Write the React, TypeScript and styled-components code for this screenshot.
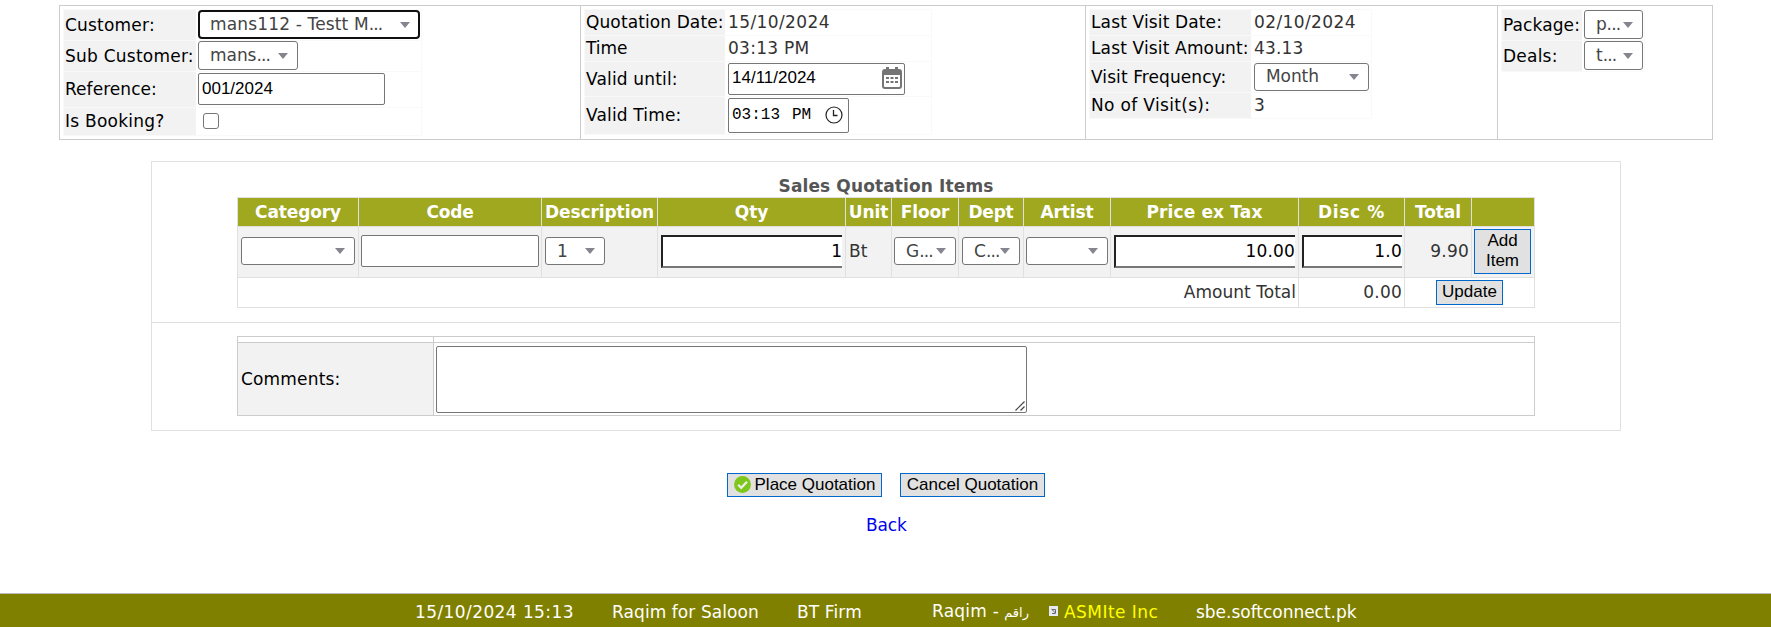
import React from 'react';
import styled, { createGlobalStyle, css } from 'styled-components';

const GlobalStyle = createGlobalStyle`
  * { box-sizing: border-box; }
  body {
    margin: 0;
    background: #fff;
    font: 17px/20px Verdana, 'DejaVu Sans', sans-serif;
    color: #333;
    overflow: hidden;
  }
`;

/* Width corrections (in thousandths of an em) that give the body face Verdana's proportions. */
const REGULAR: Record<string, number> = {
  a: -12, b: -12, c: -29, d: -12, e: -19, g: -12, l: -4, i: -4, k: 13, o: -5, p: -12, q: -12,
  r: 16, ' ': 34, ':': 117, '/': 117, '.': 46, '-': 93, '(': 64, ')': 64, S: 49, I: 126, M: -20,
  T: 5, '?': 14,
};
const BOLD: Record<string, number> = {
  C: -10, a: -7, t: -23, e: -14, g: -17, r: 4, c: -5, p: -17, F: -33, ' ': 40, S: -10, I: 174,
  m: 16, '%': 200, d: -17, x: 24,
};

const Tracked = styled.span<{ $spacing: number }>`
  letter-spacing: ${(p) => p.$spacing}em;
  white-space: nowrap;
`;

function Text({ children, bold }: { children: string; bold?: boolean }) {
  const table = bold ? BOLD : REGULAR;
  const total = [...children].reduce((sum, ch) => sum + (table[ch] || 0), 0);
  return <Tracked $spacing={total / children.length / 1000}>{children}</Tracked>;
}

const Page = styled.div`
  height: 627px;
  padding-top: 5px;
  display: flex;
  flex-direction: column;
  align-items: flex-start;
`;

const Summary = styled.div`
  display: flex;
  margin-left: 59px;
  height: 135px;
  border: 1px solid #ccc;
`;

const SummaryCell = styled.div<{ $width: number }>`
  width: ${(p) => p.$width}px;
  padding: 3px;
  & + & { border-left: 1px solid #ccc; }
`;

const Fields = styled.div<{ $width: number }>`
  width: ${(p) => p.$width}px;
  border: 1px solid #f9f9f9;
  border-bottom: 0;
`;

const FieldRow = styled.div<{ $height: number }>`
  display: flex;
  height: ${(p) => p.$height}px;
  border-bottom: 1px solid #f9f9f9;
`;

const FieldLabel = styled.div<{ $width: number }>`
  width: ${(p) => p.$width}px;
  padding: 0 0 1px 1px;
  display: flex;
  align-items: center;
  background: #f2f2f2;
  color: #000;
`;

const FieldValue = styled.div<{ $pad?: number }>`
  flex: 1;
  padding: 0 0 1px ${(p) => p.$pad ?? 2}px;
  display: flex;
  align-items: center;
`;

const SelectBox = styled.div<{ $width: number; $height?: number; $focused?: boolean }>`
  width: ${(p) => p.$width}px;
  height: ${(p) => p.$height ?? 29}px;
  flex: none;
  display: flex;
  align-items: center;
  justify-content: space-between;
  padding: 0 9px 0 11px;
  border: 1px solid #767676;
  border-radius: 3px;
  background: #fff;
  color: #444;
  ${(p) => p.$focused && css`
    border: 2px solid #101010;
    border-radius: 4px;
    padding: 0 8px 0 10px;
  `}
`;

const SelectText = styled.span`
  min-width: 0;
  flex: 1;
  white-space: nowrap;
  padding-bottom: 1px;
`;

const Dots = styled.span`
  letter-spacing: -0.05em;
`;

const Caret = styled.i`
  flex: none;
  border: 5px solid transparent;
  border-top: 6px solid #85858f;
  border-bottom: 0;
`;

interface SelectProps { width: number; height?: number; focused?: boolean; value?: string; clipped?: boolean }
function Select({ width, height, focused, value, clipped }: SelectProps) {
  return (
    <SelectBox $width={width} $height={height} $focused={focused}>
      <SelectText>
        {value && <Text>{value}</Text>}
        {clipped && <Dots>...</Dots>}
      </SelectText>
      <Caret />
    </SelectBox>
  );
}

const InputBox = styled.div<{ $width: number; $height?: number; $pad?: number }>`
  width: ${(p) => p.$width}px;
  height: ${(p) => p.$height ?? 32}px;
  display: flex;
  align-items: center;
  justify-content: space-between;
  padding: 0 2px 1px ${(p) => p.$pad ?? 3}px;
  border: 1px solid #767676;
  border-radius: 2px;
  background: #fff;
  color: #000;
  font-family: Arial, 'Liberation Sans', sans-serif;
`;

const TimeInput = styled(InputBox)`
  padding: 0 5px 0 3px;
  font-family: Consolas, 'Liberation Mono', monospace;
  font-size: 16px;
`;

const TimeParts = styled.span`
  display: flex;
`;

const TimePart = styled.span<{ $gap?: number }>`
  margin-left: ${(p) => p.$gap ?? 0}px;
`;

const Checkbox = styled.span`
  width: 16px;
  height: 16px;
  border: 1px solid #767676;
  border-radius: 3px;
`;

const NumberInput = styled.div<{ $width: number }>`
  width: ${(p) => p.$width}px;
  height: 33px;
  display: flex;
  align-items: center;
  justify-content: flex-end;
  background: #fff;
  color: #000;
  border: solid #222;
  border-width: 2px 0 2px 2px;
  border-bottom-color: #767676;
`;

const Panel = styled.div`
  width: 1470px;
  height: 270px;
  margin: 21px 0 0 151px;
  border: 1px solid #e0e0e0;
`;

const ItemsSection = styled.div`
  height: 161px;
  padding: 12px 0 0 85px;
  border-bottom: 1px solid #e0e0e0;
`;

const ItemsTitle = styled.div`
  width: 1298px;
  height: 23px;
  line-height: 25px;
  text-align: center;
  font-weight: bold;
  color: #555;
`;

const columns = '120px 182px 115px 187px 45px 66px 64px 86px 187px 105px 66px 62px';

const ItemsTable = styled.div`
  width: 1298px;
  display: grid;
  grid-template-columns: ${columns};
  grid-template-rows: 28px 50px 29px;
  gap: 1px;
  padding: 1px;
  background: #e0e0e0;
`;

const HeadCell = styled.div`
  display: flex;
  align-items: center;
  justify-content: center;
  background: #9fa81f;
  color: #fff;
  font-weight: bold;
`;

const Cell = styled.div<{ $align?: 'end' | 'center'; $pad?: number }>`
  min-width: 0;
  display: flex;
  align-items: center;
  justify-content: ${(p) => (p.$align ? (p.$align === 'end' ? 'flex-end' : 'center') : 'flex-start')};
  padding: 0 2px 2px ${(p) => p.$pad ?? 2}px;
  background: #f2f2f2;
`;

const TotalCell = styled(Cell)<{ $span?: number }>`
  grid-column: span ${(p) => p.$span ?? 1};
  padding-bottom: ${(p) => (p.$align === 'end' ? 1 : 0)}px;
  background: #fff;
`;

const CommentsTable = styled.div`
  width: 1298px;
  margin: 13px 0 0 85px;
  display: grid;
  grid-template-columns: 195px 1fr;
  grid-template-rows: 5px 72px;
  gap: 1px;
  padding: 1px;
  background: #ccc;
`;

const CommentsCell = styled.div<{ $label?: boolean }>`
  display: flex;
  align-items: center;
  padding-left: ${(p) => (p.$label ? 3 : 2)}px;
  background: ${(p) => (p.$label ? '#f2f2f2' : '#fff')};
  color: #000;
`;

const CommentsBox = styled.div`
  width: 591px;
  height: 67px;
  border: 1px solid #767676;
  border-radius: 2px;
  display: flex;
  align-items: flex-end;
  justify-content: flex-end;
  padding: 1px;
`;

const Button = styled.button<{ $width: number; $height: number }>`
  width: ${(p) => p.$width}px;
  height: ${(p) => p.$height}px;
  flex: none;
  display: flex;
  align-items: center;
  justify-content: center;
  gap: 4px;
  margin: 0;
  padding: 0 0 1px;
  border: 1px solid #0067cc;
  background: #e1e1e1;
  color: #000;
  font: 17px/20px Arial, 'Liberation Sans', sans-serif;
`;

const Actions = styled.div`
  display: flex;
  gap: 18px;
  margin: 42px 0 0 727px;
`;

const BackLink = styled.a`
  margin: 18px 0 0 866px;
  color: #0000ee;
`;

const Footer = styled.footer`
  width: 100%;
  height: 34px;
  margin-top: auto;
  padding: 3px 0 0 415px;
  display: flex;
  align-items: center;
  background: #808000;
  border-top: 1px solid #bbb;
  color: #fff;
`;

const FooterItem = styled.span<{ $width?: number; $yellow?: boolean }>`
  width: ${(p) => (p.$width ? p.$width + 'px' : 'auto')};
  white-space: nowrap;
  color: ${(p) => (p.$yellow ? '#ffff00' : '#fff')};
`;

const Urdu = styled.span`
  font-family: 'DejaVu Sans', sans-serif;
  font-size: 13px;
  margin-left: 5px;
`;

const FooterIcon = styled.svg`
  flex: none;
  margin: 0 6px 3px 0;
`;

const CalendarIcon = () => (
  <svg width="20" height="22" viewBox="0 0 20 22">
    <path d="M3 3h14a2 2 0 0 1 2 2v14a2 2 0 0 1-2 2H3a2 2 0 0 1-2-2V5a2 2 0 0 1 2-2z" fill="#fff" stroke="#757575" strokeWidth="2" />
    <path d="M1 4h18v4H1zM4 0h3v4H4zM13 0h3v4h-3z" fill="#757575" />
    <path d="M4 10h3v2H4zM8.5 10h3v2h-3zM13 10h3v2h-3zM4 14h3v2H4zM8.5 14h3v2h-3zM13 14h3v2h-3z" fill="#757575" />
  </svg>
);

const ClockIcon = () => (
  <svg width="18" height="18" viewBox="0 0 18 18" fill="none" stroke="#222">
    <circle cx="9" cy="9" r="8" strokeWidth="1.2" />
    <path d="M8.5 4v5.5h4" strokeWidth="1.3" />
  </svg>
);

const CheckIcon = () => (
  <svg width="17" height="17" viewBox="0 0 17 17">
    <circle cx="8.5" cy="8.5" r="8.4" fill="#7dc61a" />
    <path d="M4.2 8.8l3 3 5.8-6" fill="none" stroke="#eee" strokeWidth="2.3" />
  </svg>
);

const Grip = () => (
  <svg width="10" height="10" viewBox="0 0 10 10" fill="none" stroke="#444" strokeWidth="1.2">
    <path d="M0.5 9.5l9-9M5.5 9.5l4-4" />
  </svg>
);

interface FieldProps { label: string; labelWidth: number; height: number; pad?: number; children: React.ReactNode }
function Field({ label, labelWidth, height, pad, children }: FieldProps) {
  return (
    <FieldRow $height={height}>
      <FieldLabel $width={labelWidth}><Text>{label}</Text></FieldLabel>
      <FieldValue $pad={pad}>{children}</FieldValue>
    </FieldRow>
  );
}

const headings = ['Category', 'Code', 'Description', 'Qty', 'Unit', 'Floor', 'Dept', 'Artist', 'Price ex Tax', 'Disc %', 'Total', ''];

export default function App() {
  return (
    <>
      <GlobalStyle />
      <Page>
        <Summary>
          <SummaryCell $width={520}>
            <Fields $width={359}>
              <Field label="Customer:" labelWidth={132} height={31}>
                <Select width={222} focused value="mans112 - Testt M" clipped />
              </Field>
              <Field label="Sub Customer:" labelWidth={132} height={31}>
                <Select width={100} value="mans" clipped />
              </Field>
              <Field label="Reference:" labelWidth={132} height={36}>
                <InputBox $width={187}>001/2024</InputBox>
              </Field>
              <Field label="Is Booking?" labelWidth={132} height={28} pad={7}>
                <Checkbox />
              </Field>
            </Fields>
          </SummaryCell>
          <SummaryCell $width={505}>
            <Fields $width={348}>
              <Field label="Quotation Date:" labelWidth={140} height={26} pad={3}><Text>15/10/2024</Text></Field>
              <Field label="Time" labelWidth={140} height={26} pad={3}><Text>03:13 PM</Text></Field>
              <Field label="Valid until:" labelWidth={140} height={35} pad={3}>
                <InputBox $width={177}>
                  14/11/2024
                  <CalendarIcon />
                </InputBox>
              </Field>
              <Field label="Valid Time:" labelWidth={140} height={38} pad={3}>
                <TimeInput $width={121} $height={35}>
                  <TimeParts>
                    <TimePart>03</TimePart>
                    <TimePart>:</TimePart>
                    <TimePart>13</TimePart>
                    <TimePart $gap={12}>PM</TimePart>
                  </TimeParts>
                  <ClockIcon />
                </TimeInput>
              </Field>
            </Fields>
          </SummaryCell>
          <SummaryCell $width={412}>
            <Fields $width={283}>
              <Field label="Last Visit Date:" labelWidth={161} height={26} pad={3}><Text>02/10/2024</Text></Field>
              <Field label="Last Visit Amount:" labelWidth={161} height={26} pad={3}><Text>43.13</Text></Field>
              <Field label="Visit Frequency:" labelWidth={161} height={31} pad={3}>
                <Select width={115} height={28} value="Month" />
              </Field>
              <Field label="No of Visit(s):" labelWidth={161} height={26} pad={3}><Text>3</Text></Field>
            </Fields>
          </SummaryCell>
          <SummaryCell $width={215}>
            <Fields $width={144}>
              <Field label="Package:" labelWidth={80} height={31}>
                <Select width={59} value="p" clipped />
              </Field>
              <Field label="Deals:" labelWidth={80} height={31}>
                <Select width={59} value="t" clipped />
              </Field>
            </Fields>
          </SummaryCell>
        </Summary>

        <Panel>
          <ItemsSection>
            <ItemsTitle><Text bold>Sales Quotation Items</Text></ItemsTitle>
            <ItemsTable>
              {headings.map((h) => (
                <HeadCell key={h}>{h && <Text bold>{h}</Text>}</HeadCell>
              ))}
              <Cell $pad={3}><Select width={114} height={28} /></Cell>
              <Cell><InputBox $width={178} /></Cell>
              <Cell $pad={3}><Select width={60} height={28} value="1" /></Cell>
              <Cell $pad={3}><NumberInput $width={181}><Text>1</Text></NumberInput></Cell>
              <Cell $pad={3}><Text>Bt</Text></Cell>
              <Cell><Select width={62} height={28} value="G" clipped /></Cell>
              <Cell $pad={3}><Select width={58} height={28} value="C" clipped /></Cell>
              <Cell><Select width={82} height={28} /></Cell>
              <Cell $pad={3}><NumberInput $width={181}><Text>10.00</Text></NumberInput></Cell>
              <Cell $pad={3}><NumberInput $width={100}><Text>1.0</Text></NumberInput></Cell>
              <Cell $align="end"><Text>9.90</Text></Cell>
              <Cell><Button $width={57} $height={45}>Add<br />Item</Button></Cell>
              <TotalCell $span={9} $align="end"><Text>Amount Total</Text></TotalCell>
              <TotalCell $align="end"><Text>0.00</Text></TotalCell>
              <TotalCell $span={2} $align="center"><Button $width={67} $height={25}>Update</Button></TotalCell>
            </ItemsTable>
          </ItemsSection>
          <CommentsTable>
            <CommentsCell />
            <CommentsCell />
            <CommentsCell $label><Text>Comments:</Text></CommentsCell>
            <CommentsCell><CommentsBox><Grip /></CommentsBox></CommentsCell>
          </CommentsTable>
        </Panel>

        <Actions>
          <Button $width={155} $height={24}><CheckIcon />Place Quotation</Button>
          <Button $width={145} $height={24}>Cancel Quotation</Button>
        </Actions>
        <BackLink><Text>Back</Text></BackLink>

        <Footer>
          <FooterItem $width={197}><Text>15/10/2024 15:13</Text></FooterItem>
          <FooterItem $width={185}><Text>Raqim for Saloon</Text></FooterItem>
          <FooterItem $width={135}><Text>BT Firm</Text></FooterItem>
          <FooterItem $width={117}><Text>Raqim -</Text><Urdu>راقم</Urdu></FooterItem>
          <FooterIcon width="9" height="10" viewBox="0 0 9 10">
            <path d="M0 0h9v10H0z" fill="#e8e8f0" />
            <path d="M3 3.5h3.5V7M6.5 7L2.5 3.2M3 7.5h3.5" fill="none" stroke="#667" />
          </FooterIcon>
          <FooterItem $width={132} $yellow><Text>ASMIte Inc</Text></FooterItem>
          <FooterItem><Text>sbe.softconnect.pk</Text></FooterItem>
        </Footer>
      </Page>
    </>
  );
}
